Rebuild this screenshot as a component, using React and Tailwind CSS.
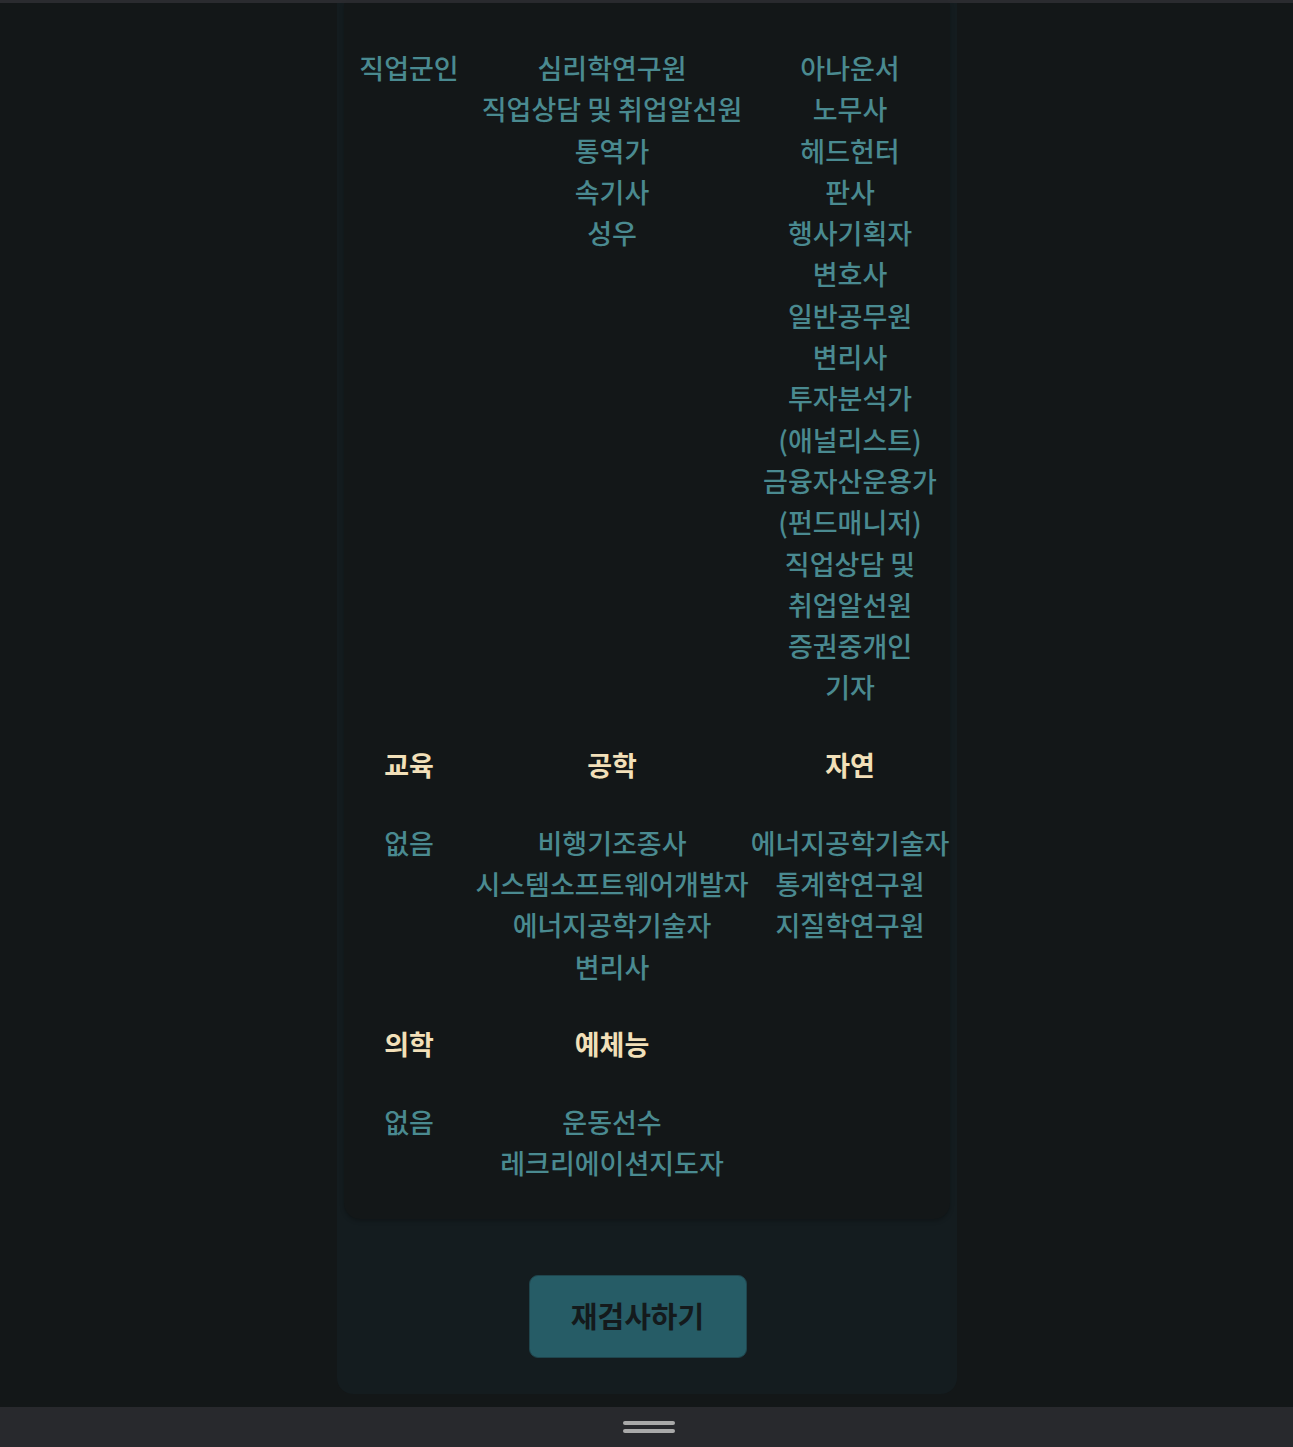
const font = { fontFamily: '"Noto Sans CJK KR", "Noto Sans", sans-serif' };

const sections = [
  {
    heads: null,
    cols: [
      ['직업군인'],
      ['심리학연구원', '직업상담 및 취업알선원', '통역가', '속기사', '성우'],
      [
        '아나운서',
        '노무사',
        '헤드헌터',
        '판사',
        '행사기획자',
        '변호사',
        '일반공무원',
        '변리사',
        '투자분석가',
        '(애널리스트)',
        '금융자산운용가',
        '(펀드매니저)',
        '직업상담 및',
        '취업알선원',
        '증권중개인',
        '기자',
      ],
    ],
  },
  {
    heads: ['교육', '공학', '자연'],
    cols: [
      ['없음'],
      ['비행기조종사', '시스템소프트웨어개발자', '에너지공학기술자', '변리사'],
      ['에너지공학기술자', '통계학연구원', '지질학연구원'],
    ],
  },
  {
    heads: ['의학', '예체능', ''],
    cols: [['없음'], ['운동선수', '레크리에이션지도자'], []],
  },
];

function Section({ heads, cols }) {
  return (
    <div>
      {heads && (
        <div className="grid grid-cols-[130px_276px_200px] mt-[36px] mb-[37px]">
          {heads.map((h, i) => (
            <div key={i} className="text-center text-[27px] leading-[41px] font-bold text-[#f2e0b9] whitespace-nowrap">
              {h}
            </div>
          ))}
        </div>
      )}
      <div className="grid grid-cols-[130px_276px_200px] items-start">
        {cols.map((list, i) => (
          <div key={i} className="flex flex-col items-center">
            {list.map((t, j) => (
              <div key={j} className="text-[27px] leading-[41.3px] font-medium text-[#4a8a90] whitespace-nowrap">
                {t}
              </div>
            ))}
          </div>
        ))}
      </div>
    </div>
  );
}

export default function App() {
  return (
    <div className="min-h-[1447px] bg-[#131718] flex flex-col" style={font}>
      <div className="h-[3px] bg-[#2a2b2f]" />
      <div className="flex justify-center pl-[1px]">
        <div className="w-[620px] bg-[#141c1f] rounded-b-[16px] px-[7px] pb-[36px]">
          <div className="bg-[#131718] rounded-b-[16px] pt-[44px] pb-[35px] shadow-[0_2px_4px_rgba(0,0,0,0.25)]">
            {sections.map((s, i) => (
              <Section key={i} heads={s.heads} cols={s.cols} />
            ))}
          </div>
          <div className="flex justify-center mt-[56px] pr-[19px]">
            <button className="w-[218px] h-[83px] rounded-[9px] bg-[#265c66] border border-[#1f454d] text-[#141a1c] text-[29px] font-bold">
              재검사하기
            </button>
          </div>
        </div>
      </div>
      <div className="h-[13px]" />
      <div className="h-[40px] bg-[#28292d] flex flex-col items-center justify-center gap-[4px] mt-auto pl-[4px]">
        <div className="w-[52px] h-[4px] rounded-full bg-[#a9a9a9]" />
        <div className="w-[52px] h-[4px] rounded-full bg-[#a9a9a9]" />
      </div>
    </div>
  );
}
